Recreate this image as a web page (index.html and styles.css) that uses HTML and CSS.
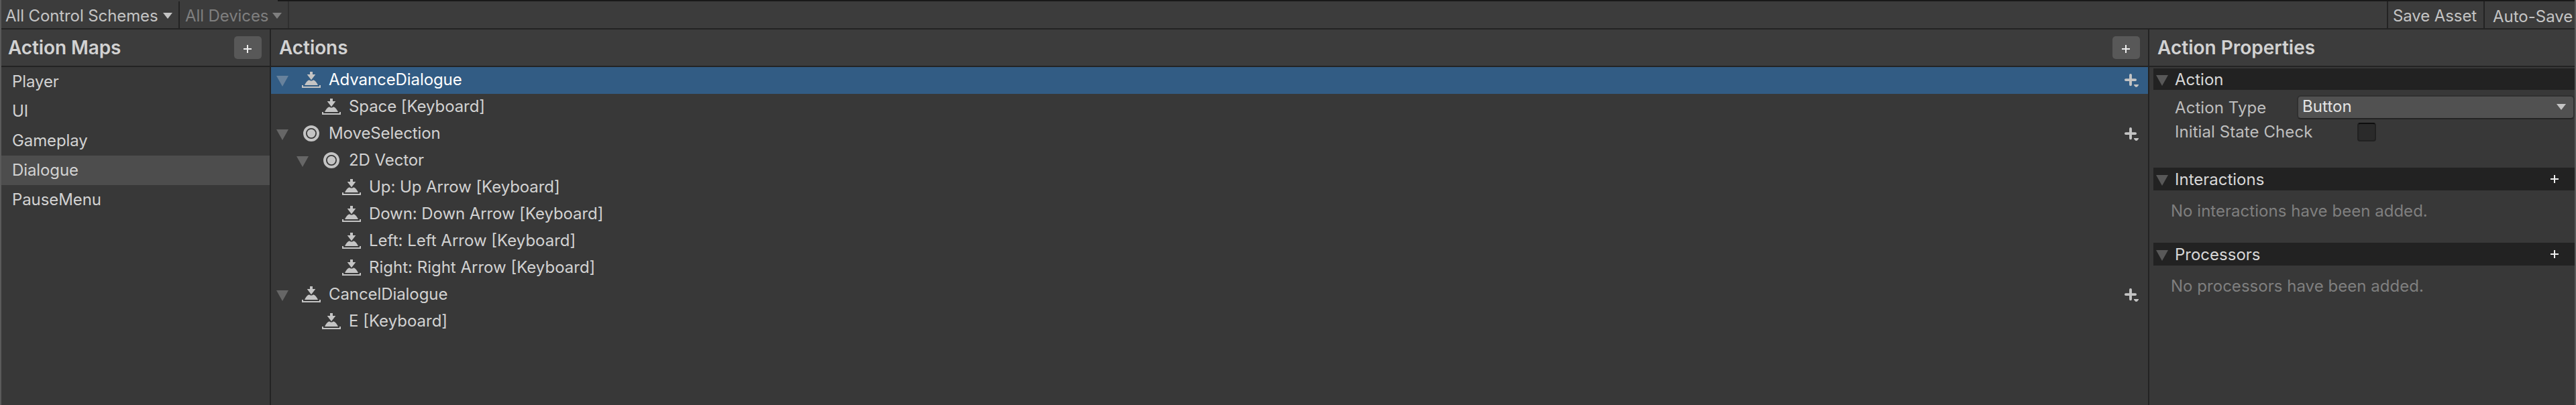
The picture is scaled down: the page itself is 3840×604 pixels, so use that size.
FILE: index.html
```
<!DOCTYPE html>
<html lang="en">
<head>
<meta charset="utf-8">
<title>Input Actions Editor</title>
<link rel="stylesheet" href="styles.css">
</head>
<body>
<svg class="defs" aria-hidden="true">
  <symbol id="caret" viewBox="0 0 14 9"><path d="M0 0h14L7 9z" fill="currentColor"/></symbol>
  <symbol id="fold" viewBox="0 0 18 16"><path d="M0 0h18L9 16z" fill="currentColor"/></symbol>
  <symbol id="press" viewBox="0 0 28 24">
    <path d="M12 0h4v4h4.300L14 12.200 7.700 4H12z" fill="currentColor"/>
    <path d="M4.300 20v-.8C6 16 8 13.200 10.200 12.500h1.200c.8 1.300 4.400 1.300 5.200 0h1.200C20 13.200 22 16 23.700 19.200v.8z" fill="currentColor"/>
    <path d="M0 20h2v2h24v-2h2v4H0z" fill="currentColor"/>
  </symbol>
  <symbol id="ring" viewBox="0 0 28 24">
    <circle cx="14" cy="12" r="10" fill="none" stroke="currentColor" stroke-width="4"/>
    <circle cx="14" cy="12" r="6.200" fill="currentColor"/>
  </symbol>
  <symbol id="plus" viewBox="0 0 12 12"><path d="M5 0h2v5h5v2H7v5H5V7H0V5h5z" fill="currentColor"/></symbol>
  <symbol id="plusmenu" viewBox="0 0 22 20">
    <path d="M10 2v14.200M2.900 9.100h14.200" fill="none" stroke="currentColor" stroke-width="3.900" stroke-linecap="round"/>
    <path d="M15 16h7v1l-2.300 2.700h-2.400L15 17z" fill="currentColor"/>
  </symbol>
</svg>
<div class="window">
  <div class="topline"></div>
  <div class="toolbar">
    <div class="tool schemes">All Control Schemes<svg class="caret"><use href="#caret"/></svg></div>
    <div class="tool devices">All Devices<svg class="caret"><use href="#caret"/></svg></div>
    <div class="spacer"></div>
    <div class="tool save">Save Asset</div>
    <div class="tool autosave">Auto-Save</div>
  </div>
  <div class="columns">
    <section class="column maps">
      <header class="head">Action Maps<span class="add"><svg class="plus"><use href="#plus"/></svg></span></header>
      <div class="map">Player</div>
      <div class="map">UI</div>
      <div class="map">Gameplay</div>
      <div class="map current">Dialogue</div>
      <div class="map">PauseMenu</div>
    </section>
    <section class="column actions">
      <header class="head">Actions<span class="add"><svg class="plus"><use href="#plus"/></svg></span></header>
      <div class="row selected"><svg class="fold"><use href="#fold"/></svg><svg class="kind"><use href="#press"/></svg><span class="label">AdvanceDialogue</span><svg class="plusmenu"><use href="#plusmenu"/></svg></div>
      <div class="row level1"><span class="fold"></span><svg class="kind"><use href="#press"/></svg><span class="label">Space [Keyboard]</span></div>
      <div class="row"><svg class="fold"><use href="#fold"/></svg><svg class="kind"><use href="#ring"/></svg><span class="label">MoveSelection</span><svg class="plusmenu"><use href="#plusmenu"/></svg></div>
      <div class="row level1"><svg class="fold"><use href="#fold"/></svg><svg class="kind"><use href="#ring"/></svg><span class="label">2D Vector</span></div>
      <div class="row level2"><span class="fold"></span><svg class="kind"><use href="#press"/></svg><span class="label">Up: Up Arrow [Keyboard]</span></div>
      <div class="row level2"><span class="fold"></span><svg class="kind"><use href="#press"/></svg><span class="label">Down: Down Arrow [Keyboard]</span></div>
      <div class="row level2 loose"><span class="fold"></span><svg class="kind"><use href="#press"/></svg><span class="label">Left: Left Arrow [Keyboard]</span></div>
      <div class="row level2 loose"><span class="fold"></span><svg class="kind"><use href="#press"/></svg><span class="label">Right: Right Arrow [Keyboard]</span></div>
      <div class="row"><svg class="fold"><use href="#fold"/></svg><svg class="kind"><use href="#press"/></svg><span class="label">CancelDialogue</span><svg class="plusmenu"><use href="#plusmenu"/></svg></div>
      <div class="row level1 loose"><span class="fold"></span><svg class="kind"><use href="#press"/></svg><span class="label">E [Keyboard]</span></div>
    </section>
    <section class="column properties">
      <header class="head">Action Properties</header>
      <div class="group first"><svg class="fold"><use href="#fold"/></svg><span class="title">Action</span></div>
      <div class="fields">
        <div class="field type"><span class="name">Action Type</span><div class="dropdown"><span>Button</span><svg class="caret"><use href="#caret"/></svg></div></div>
        <div class="field check"><span class="name">Initial State Check</span><span class="checkbox"></span></div>
      </div>
      <div class="group"><svg class="fold"><use href="#fold"/></svg><span class="title">Interactions</span><svg class="plus"><use href="#plus"/></svg></div>
      <div class="empty">No interactions have been added.</div>
      <div class="group"><svg class="fold"><use href="#fold"/></svg><span class="title">Processors</span><svg class="plus"><use href="#plus"/></svg></div>
      <div class="empty">No processors have been added.</div>
    </section>
  </div>
</div>
</body>
</html>
```
FILE: styles.css
```
* { box-sizing: border-box; }

body {
  margin: 0;
  background: #383838;
  color: #d2d2d2;
  font: 400 24px/29px Inter, sans-serif;
  white-space: nowrap;
}

svg { display: block; flex: none; }
.defs { position: absolute; width: 0; height: 0; }

.window {
  display: flex;
  flex-direction: column;
  width: 3840px;
  height: 604px;
  overflow: hidden;
  border: solid #5a5a5a;
  border-width: 0 2px;
  background: #3c3c3c;
}

.topline {
  height: 2px;
  margin-left: 412px;
  background: #191919;
}

/* Toolbar */
.toolbar {
  display: flex;
  height: 42px;
  border-bottom: 2px solid #232323;
  background: #3c3c3c;
  color: #c4c4c4;
  letter-spacing: -0.1px;
}
.tool {
  display: flex;
  align-items: flex-start;
  height: 40px;
  padding-top: 7px;
}
.caret { width: 14px; height: 9px; }
.tool .caret { margin: 10px 9px 0 auto; }
.schemes { width: 266px; padding-left: 6px; border-right: 2px solid #232323; }
.devices { width: 163px; padding-left: 8px; border-right: 2px solid #303030; color: #7f7f7f; }
.spacer { flex: 1; }
.save { width: 146px; padding-left: 7px; border: solid #232323; border-width: 0 2px; }
.autosave { width: 134px; padding: 8px 0 0 12px; letter-spacing: 0; }

/* Columns */
.columns { display: flex; flex: 1; background: #383838; }
.column { display: flex; flex-direction: column; }
.maps { width: 402px; border-right: 2px solid #232323; letter-spacing: -0.1px; }
.actions { width: 2800px; border-right: 2px solid #232323; letter-spacing: -0.08px; }
.properties { flex: 1; }

.head {
  display: flex;
  align-items: center;
  justify-content: space-between;
  height: 56px;
  padding: 0 12px 0 10px;
  border-bottom: 2px solid #232323;
  background: #3c3c3c;
  font-size: 28px;
  font-weight: 600;
  line-height: 34px;
}
.actions .head, .properties .head { padding-left: 12px; }
.add {
  display: flex;
  align-items: center;
  justify-content: center;
  width: 41px;
  height: 34px;
  padding: 4px 1px 0 0;
  border-radius: 5px;
  background: #585858;
}
.plus { width: 12px; height: 12px; color: #eeeeee; }

/* Action maps */
.map { height: 44px; padding: 7px 0 0 16px; }
.map.current {
  margin-left: -2px;
  border-left: 2px solid #6c6c6c;
  background: #4d4d4d;
}

/* Action tree */
.row {
  display: flex;
  align-items: center;
  height: 40px;
  padding: 0 14px 0 8px;
}
.level1 { padding-left: 38px; }
.level2 { padding-left: 68px; }
.loose { letter-spacing: 0; }
.fold { flex: none; width: 18px; height: 16px; color: #666666; }
.row .fold { margin: 2px 20px 0 0; }
.kind { width: 28px; height: 24px; margin: -2px 12px 0 0; color: #c4c4c4; }
.label { flex: 1; height: 40px; padding-top: 4px; }
.plusmenu { width: 22px; height: 20px; color: #c4c4c4; }
.selected { background: #325c84; color: #ffffff; }
.selected .fold { color: #68829c; }

/* Properties */
.group {
  display: flex;
  align-items: center;
  height: 34px;
  margin-left: 6px;
  padding: 0 24px 0 4px;
  background: #222222;
  color: #d8d8d8;
}
.group .fold { margin: 4px 10px 0 0; color: #585858; }
.title { flex: 1; align-self: flex-start; padding-top: 3px; }
.first { height: 32px; margin-top: 2px; }
.first .title { padding-top: 2px; }
.fields {
  display: flex;
  flex-direction: column;
  height: 116px;
  padding: 8px 0 0 38px;
  color: #bebebe;
  letter-spacing: 0.08px;
}
.field { display: flex; align-items: flex-start; }
.name { width: 182px; }
.type { height: 40px; }
.type .name { padding-top: 4px; }
.dropdown {
  display: flex;
  align-items: flex-start;
  justify-content: space-between;
  width: 414px;
  height: 36px;
  padding: 0 11px 0 6px;
  border: 2px solid #303030;
  border-bottom-color: #242424;
  border-radius: 6px;
  background: #515151;
  color: #e4e4e4;
}
.dropdown .caret { margin-top: 11px; color: #c4c4c4; }
.check .name { width: 272px; }
.checkbox {
  width: 28px;
  height: 28px;
  margin-top: 1px;
  border: 2px solid #212121;
  border-top-color: #0d0d0d;
  border-radius: 4px;
  background: #2a2a2a;
}
.empty {
  height: 78px;
  padding: 16px 0 0 32px;
  color: #7f7f7f;
  letter-spacing: 0.03px;
}
```
